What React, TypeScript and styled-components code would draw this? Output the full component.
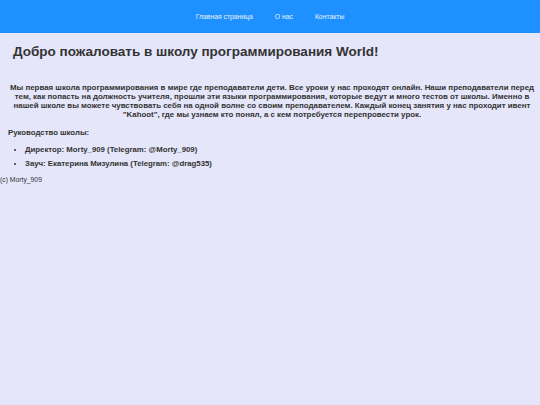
import React from "react";
import styled, { createGlobalStyle } from "styled-components";

const Global = createGlobalStyle`
  html, body { margin: 0; padding: 0; background: #e6e6fa; }
  body { font-family: "Liberation Sans", Arial, sans-serif; color: #333; }
`;

const Header = styled.header`
  height: 33px;
  background: #1e90ff;
  display: flex;
  align-items: center;
  justify-content: center;
`;

const Nav = styled.nav`
  display: flex;
  gap: 22px;
  padding-left: 0px;
`;

const NavLink = styled.a`
  color: #e8f0fa;
  font-size: 6.8px;
  text-decoration: none;
`;

const Main = styled.main`
  display: flex;
  flex-direction: column;
`;

const Title = styled.h1`
  margin: 10px 0 0 13px;
  font-size: 13.5px;
  line-height: 18px;
  font-weight: bold;
  color: #333;
`;

const Intro = styled.p`
  margin: 22px 2px 0 6px;
  font-size: 7.9px;
  line-height: 9px;
  font-weight: bold;
  text-align: center;
  color: #333;
`;

const Subhead = styled.h3`
  margin: 9px 0 0 8px;
  font-size: 7.8px;
  line-height: 10px;
  font-weight: bold;
`;

const List = styled.ul`
  margin: 7px 0 0 0;
  padding: 0 0 0 25px;
  display: flex;
  flex-direction: column;
  gap: 5px;
`;

const Item = styled.li`
  font-size: 7.8px;
  line-height: 9px;
  font-weight: bold;
`;

const Footer = styled.footer`
  margin-top: 8px;
  font-size: 6.8px;
  line-height: 8px;
  color: #333;
`;

export default function App() {
  return (
    <>
      <Global />
      <Header>
        <Nav>
          <NavLink href="#">Главная страница</NavLink>
          <NavLink href="#">О нас</NavLink>
          <NavLink href="#">Контакты</NavLink>
        </Nav>
      </Header>
      <Main>
        <Title>Добро пожаловать в школу программирования World!</Title>
        <Intro>
          Мы первая школа программирования в мире где преподаватели дети. Все уроки у нас проходят онлайн. Наши преподаватели перед тем, как попасть на должность учителя, прошли эти языки программирования, которые ведут и много тестов от школы. Именно в нашей школе вы можете чувствовать себя на одной волне со своим преподавателем. Каждый конец занятия у нас проходит ивент "Kahoot", где мы узнаем кто понял, а с кем потребуется перепровести урок.
        </Intro>
        <Subhead>Руководство школы:</Subhead>
        <List>
          <Item>Директор: Morty_909 (Telegram: @Morty_909)</Item>
          <Item>Зауч: Екатерина Мизулина (Telegram: @drag535)</Item>
        </List>
        <Footer>(c) Morty_909</Footer>
      </Main>
    </>
  );
}
